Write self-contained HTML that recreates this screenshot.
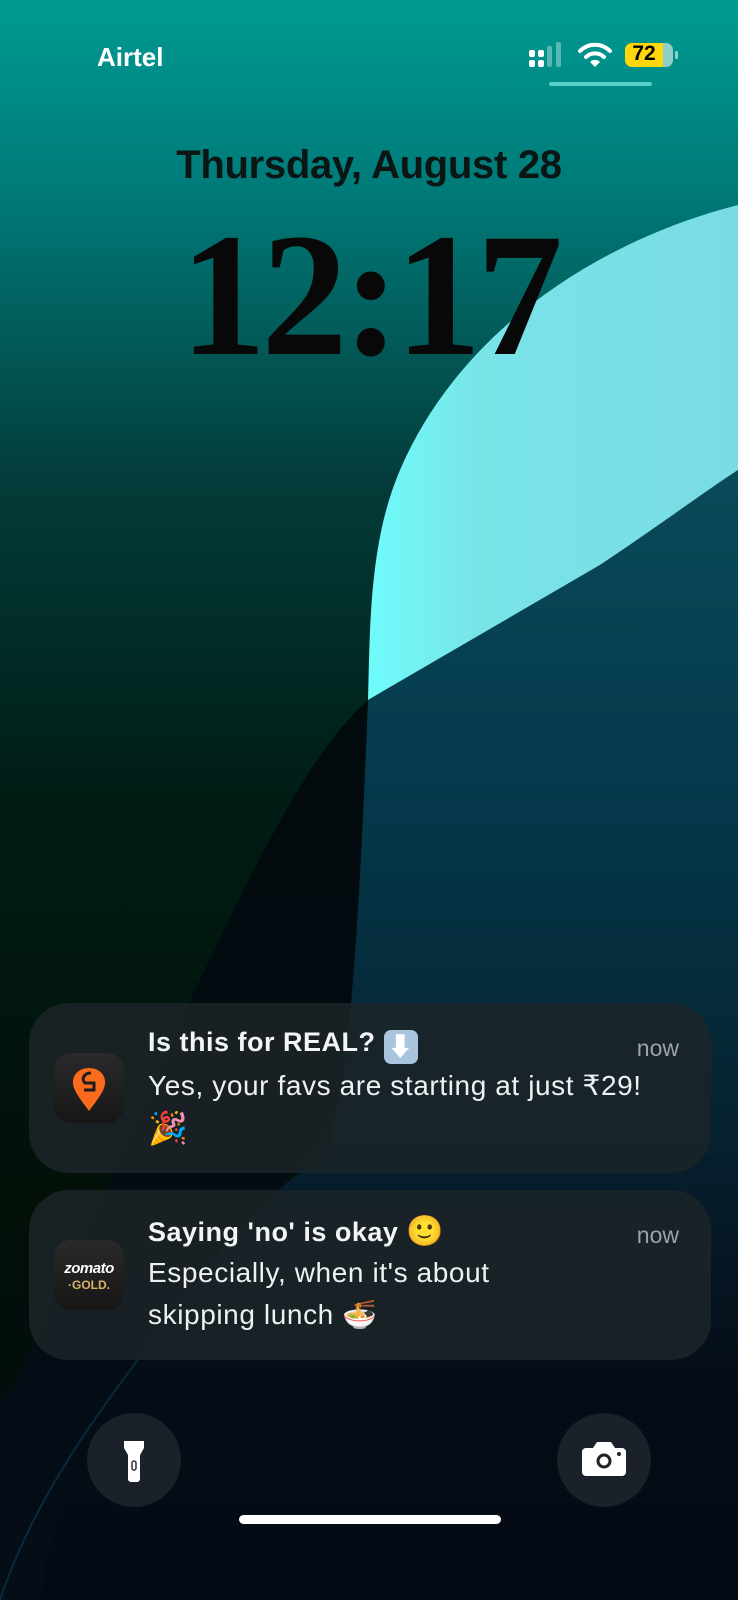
<!DOCTYPE html>
<html><head><meta charset="utf-8"><style>
*{margin:0;padding:0;box-sizing:border-box}
body{width:738px;height:1600px;overflow:hidden;position:relative;background:#000;font-family:"Liberation Sans","Noto Sans CJK JP",sans-serif}
.abs{position:absolute}
.card{position:absolute;left:29px;width:682px;border-radius:40px;background:rgba(28,36,40,0.85)}
.icon{position:absolute;left:25px;width:70px;height:70px;border-radius:17px;background:linear-gradient(#2a2a2a,#161616)}
.t{position:absolute;left:119px;color:#f2f4f5;font-size:27px;font-weight:bold;letter-spacing:0.5px;white-space:nowrap}
.b{position:absolute;left:119px;color:#eef1f2;font-size:28px;line-height:42px;letter-spacing:0.6px;white-space:nowrap}
.now{position:absolute;right:32px;color:#9aa3a8;font-size:23px}
.btn{position:absolute;width:94px;height:94px;border-radius:50%;background:rgba(30,36,42,0.9)}
</style></head><body>
<svg class="abs" style="left:0;top:0" width="738" height="1600" viewBox="0 0 738 1600">
<defs>
<linearGradient id="bg" x1="0" y1="0" x2="0" y2="1">
<stop offset="0" stop-color="#009a93"/><stop offset="0.12" stop-color="#007a78"/><stop offset="0.3" stop-color="#033c3a"/><stop offset="0.5" stop-color="#001c14"/><stop offset="0.75" stop-color="#021008"/><stop offset="1" stop-color="#030a12"/>
</linearGradient>
<linearGradient id="cy" x1="0" y1="0" x2="1" y2="0">
<stop offset="0" stop-color="#6ffcfc"/><stop offset="0.3" stop-color="#78e4e8"/><stop offset="1" stop-color="#7adbe6"/>
</linearGradient>
<linearGradient id="db" x1="0" y1="0" x2="0" y2="1">
<stop offset="0" stop-color="#0a4a58"/><stop offset="0.3" stop-color="#04384a"/><stop offset="0.6" stop-color="#06202e"/><stop offset="0.8" stop-color="#050d18"/><stop offset="1" stop-color="#040a14"/>
</linearGradient>
<linearGradient id="bk" x1="0" y1="0" x2="0" y2="1">
<stop offset="0" stop-color="#010a0c"/><stop offset="1" stop-color="#050d18"/>
</linearGradient>
</defs>
<rect width="738" height="1600" fill="url(#bg)"/>
<path d="M738 205 C600 240 460 330 400 470 C370 540 370 620 368 700 L600 565 C660 525 700 495 738 470 Z" fill="url(#cy)"/>
<path d="M368 700 L600 565 C660 525 700 495 738 470 L738 1600 L0 1600 L0 1400 C150 1300 260 1200 330 1150 C355 1000 362 850 368 700 Z" fill="url(#db)"/>
<path d="M368 700 C300 760 240 900 190 1000 C150 1100 100 1200 40 1330 L0 1420 L0 1600 L40 1600 C60 1450 130 1380 240 1230 C300 1170 330 1130 340 1100 C355 1000 362 850 368 700 Z" fill="url(#bk)"/>
<path d="M0 1600 C40 1480 120 1380 240 1230" stroke="#0d3a5a" stroke-width="2" fill="none" opacity="0.6"/>
</svg>

<div class="abs" style="left:97px;top:42px;color:#fff;font-size:26px;font-weight:bold">Airtel</div>
<div class="abs" style="left:529px;top:50px;width:6px;height:7px;background:#fff;border-radius:2px"></div>
<div class="abs" style="left:529px;top:60px;width:6px;height:7px;background:#fff;border-radius:2px"></div>
<div class="abs" style="left:538px;top:50px;width:6px;height:7px;background:#fff;border-radius:2px"></div>
<div class="abs" style="left:538px;top:60px;width:6px;height:7px;background:#fff;border-radius:2px"></div>
<div class="abs" style="left:547px;top:46px;width:5px;height:21px;background:rgba(255,255,255,0.35);border-radius:2px"></div>
<div class="abs" style="left:556px;top:42px;width:5px;height:25px;background:rgba(255,255,255,0.35);border-radius:2px"></div>
<svg class="abs" style="left:578px;top:42px" width="34" height="26" viewBox="0 0 34 26"><path d="M2 9 A21 21 0 0 1 32 9" stroke="#fff" stroke-width="4" fill="none" stroke-linecap="round"/><path d="M8 15 A13 13 0 0 1 26 15" stroke="#fff" stroke-width="4" fill="none" stroke-linecap="round"/><path d="M12 20 L17 25 L22 20 A7 7 0 0 0 12 20Z" fill="#fff"/></svg>
<div class="abs" style="left:625px;top:43px;width:48px;height:24px;border-radius:7px;background:#8fcfc8"></div>
<div class="abs" style="left:625px;top:43px;width:38px;height:24px;border-radius:7px 0 0 7px;background:#ffd60a"></div>
<div class="abs" style="left:625px;top:42px;width:38px;text-align:center;font-size:21px;font-weight:bold;color:#000">72</div>
<div class="abs" style="left:675px;top:51px;width:3px;height:8px;border-radius:2px;background:#8fcfc8"></div>
<div class="abs" style="left:549px;top:82px;width:103px;height:4px;border-radius:2px;background:#55cfc7"></div>

<div class="abs" style="left:0;width:738px;top:143px;text-align:center;font-size:40px;font-weight:bold;color:#0b1514;letter-spacing:-0.3px">Thursday, August 28</div>
<div class="abs" style="left:0;width:738px;top:196px;text-align:center;font-family:'Liberation Serif',serif;font-weight:bold;font-size:176px;color:#080808;letter-spacing:-5px;transform:scaleX(0.98);line-height:200px">12:17</div>

<div class="card" style="top:1003px;height:170px">
 <div class="icon" style="top:50px">
  <svg width="70" height="70" viewBox="0 0 70 70"><path d="M35 15 C24 15 18 23 19 31 C20 38 26 46 35 58 C44 46 50 38 51 31 C52 23 46 15 35 15Z" fill="#fc6a1c"/><path d="M37 20 C30 20 27 26 31 30 L40 30 L40 37 L30 37" stroke="#1d1d1d" stroke-width="3" fill="none"/></svg>
 </div>
 <div class="t" style="top:24px">Is this for REAL? <span style="display:inline-block;width:34px;height:34px;border-radius:7px;background:#a9c4dd;color:#fff;text-align:center;font-size:26px;line-height:34px;vertical-align:-5px">⬇</span></div>
 <div class="now" style="top:32px">now</div>
 <div class="b" style="top:62px">Yes, your favs are starting at just ₹29!<br><span style="font-size:32px">🎉</span></div>
</div>

<div class="card" style="top:1190px;height:170px">
 <div class="icon" style="top:50px;text-align:center">
  <div style="color:#fff;font-style:italic;font-weight:bold;font-size:15px;margin-top:20px;letter-spacing:-0.5px">zomato</div>
  <div style="color:#d7b46a;font-size:12px;font-weight:bold;margin-top:1px">·GOLD.</div>
 </div>
 <div class="t" style="top:24px">Saying 'no' is okay <span style="font-size:30px">🙂</span></div>
 <div class="now" style="top:32px">now</div>
 <div class="b" style="top:62px">Especially, when it's about<br>skipping lunch 🍜</div>
</div>

<div class="btn" style="left:87px;top:1413px">
 <svg width="94" height="94" viewBox="0 0 94 94"><path d="M37 28 h20 v7 l-4 7 v24 a3 3 0 0 1 -3 3 h-6 a3 3 0 0 1 -3 -3 v-24 l-4 -7z" fill="#fff"/><rect x="45" y="48" width="4" height="9" rx="2" fill="none" stroke="#333" stroke-width="1.5"/></svg>
</div>
<div class="btn" style="left:557px;top:1413px">
 <svg width="94" height="94" viewBox="0 0 94 94"><path d="M25 39 a4 4 0 0 1 4 -4 h7 l4 -6 h14 l4 6 h7 a4 4 0 0 1 4 4 v20 a4 4 0 0 1 -4 4 h-36 a4 4 0 0 1 -4 -4z" fill="#fff"/><circle cx="47" cy="48" r="7.5" fill="#1e242a"/><circle cx="47" cy="48" r="4.5" fill="#fff"/><circle cx="62" cy="41" r="2" fill="#1e242a"/></svg>
</div>
<div class="abs" style="left:239px;top:1515px;width:262px;height:9px;border-radius:5px;background:#fff"></div>
</body></html>
